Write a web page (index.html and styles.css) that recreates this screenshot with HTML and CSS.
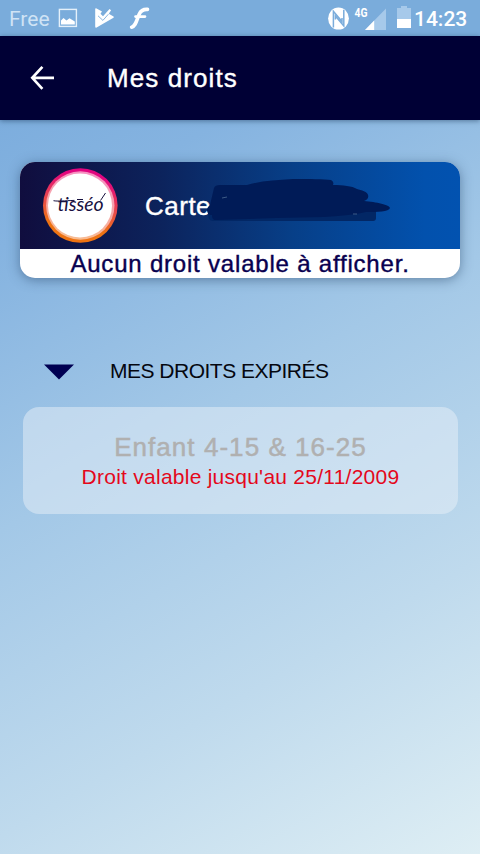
FILE: index.html
```html
<!DOCTYPE html>
<html lang="fr">
<head>
<meta charset="utf-8">
<title>Mes droits</title>
<link rel="stylesheet" href="styles.css">
</head>
<body>
<div class="status">
  <span class="carrier">Free</span>
  <svg class="notif" width="96" height="36" viewBox="56 0 96 36">
    <rect x="59.4" y="9.4" width="17" height="17" fill="none" stroke="#e4f0fa" stroke-width="1.4"/>
    <path d="M61 24.5v-4l2.5-2.6 3 2.6 3-2.2 5.3 3.2v3z" fill="#fff"/>
    <path d="M95.2 9.4q0-1.6 1.4-.9l5.4 3-1.500 2.200 2.500 2.500 6.500-7.200 1.600 1.300-2.300 3.400 4.700 2.800q.8.6 0 1.200L96.600 27.400q-1.400.8-1.400-.8z" fill="#fff"/>
    <path d="M98 15.800l4.900 4.600 5.500-6.200" fill="none" stroke="#7aacdb" stroke-width=".9"/>
    <path d="M131.600 27.200c4.200-1 5-7.200 7.600-13 1.600-3.600 4.200-5.100 8.300-4.800" fill="none" stroke="#fff" stroke-width="3.6" stroke-linecap="round"/>
    <path d="M135.500 16.600h9.500" fill="none" stroke="#fff" stroke-width="2.6" stroke-linecap="round"/>
  </svg>
  <svg class="radio" width="86" height="36" viewBox="326 0 86 36">
    <ellipse cx="338.5" cy="18.6" rx="10.4" ry="11" fill="#fff"/>
    <path d="M333.4 27.5V11.300l8.600 10.200v-3.500M343.800 9.800v16.200l-8.400-10v3.500" fill="none" stroke="#7aacdb" stroke-width="1.5"/>
    <text class="network" x="354.6" y="16.6" textLength="13" lengthAdjust="spacingAndGlyphs">4G</text>
    <path d="M386 8.500V30h-21z" fill="#a6c9ea"/>
    <path d="M374.200 20.500V30H365z" fill="#fff"/>
    <path d="M397 8h4V6h6v2h4v11h-14z" fill="#a6c9ea"/>
    <path d="M397 19h14v9h-14z" fill="#fff"/>
  </svg>
  <span class="clock">14:23</span>
</div>
<header class="appbar">
  <svg width="26" height="26" viewBox="0 0 26 26"><path d="M25 12.800H3.500M13.400 1.800L3.300 12.800l10.100 11" fill="none" stroke="#fff" stroke-width="2.700"/></svg>
  <h1 class="title">Mes droits</h1>
</header>
<main class="content">
  <section class="card">
    <div class="card-head">
      <svg class="logo" width="76" height="76" viewBox="0 0 76 76">
        <defs>
          <linearGradient id="ring" x1=".6" y1="0" x2=".4" y2="1"><stop offset=".1" stop-color="#e2057f"/><stop offset=".5" stop-color="#e94a4b"/><stop offset=".8" stop-color="#ee7312"/></linearGradient>
          <linearGradient id="inner" x1=".6" y1="0" x2=".4" y2="1"><stop offset="0" stop-color="#f590c2"/><stop offset="1" stop-color="#f8bd91"/></linearGradient>
        </defs>
        <circle cx="38.3" cy="37.5" r="37.3" fill="url(#ring)"/>
        <circle cx="38.3" cy="37.5" r="34.2" fill="url(#inner)"/>
        <ellipse cx="38" cy="37.5" rx="32" ry="32" fill="#fff"/>
        <text class="wordmark" x="15.5" y="42.5" textLength="46" lengthAdjust="spacingAndGlyphs">tisséo</text>
        <path d="M11.500 32.700c4 .8 11 0 21-.3M35 31.500h6M58.500 32.500l5-7.500" fill="none" stroke="#17113f" stroke-width="1"/>
      </svg>
      <span class="card-name">Carte</span>
      <svg class="scribble" width="190" height="48" viewBox="204 177 190 48">
        <path d="M208 213c20-2 38-6 64-5l102 1q2 0 2 3v6q0 3-3 3H213q-5 0-5-8z" fill="#022765"/>
        <path d="M214 188q1-3 6-3h27c13-4 28-5 46-6 17 0 31 0 38 1 2 1 3 3 2 5 10 0 19 1 24 4 4 1 11 3 11 6 1 3-1 5-4 6 12 1 26 4 26 7-1 4-13 4-24 4-25 6-58 5-90 6l-60 2c-3 0-4-2-4-5-3 0-5-2-5-5 0-2 1-3 3-5z" fill="#001b57"/>
        <path d="M222 198l5-1M353 214h4" stroke="#58779c" stroke-width=".7"/>
      </svg>
    </div>
    <div class="card-foot"><span>Aucun droit valable à afficher.</span></div>
  </section>
  <div class="section-head">
    <svg width="30" height="16" viewBox="0 0 30 16"><path d="M0 .5h30L15 15.500z" fill="#000052"/></svg>
    <h2 class="section-title">MES DROITS EXPIRÉS</h2>
  </div>
  <section class="expired">
    <div class="pass">Enfant 4-15 &amp; 16-25</div>
    <div class="expiry">Droit valable jusqu'au 25/11/2009</div>
  </section>
</main>
</body>
</html>
```
FILE: styles.css
```css
* { box-sizing: border-box; }
body {
  margin: 0;
  width: 480px;
  height: 854px;
  overflow: hidden;
  display: flex;
  flex-direction: column;
  font-family: "Liberation Sans", Arial, sans-serif;
  white-space: nowrap;
  background: linear-gradient(150deg, #75a8db 0%, #85b3e0 22%, #a3c8e7 47%, #bfdaed 74%, #deeef4 100%);
}
h1, h2 { margin: 0; font-weight: 400; }
svg { display: block; flex: none; }
.status {
  height: 36px;
  flex: none;
  display: flex;
  align-items: center;
  background: #7aacdb;
  font-family: Roboto, sans-serif;
}
.carrier {
  width: 56px;
  padding: 2px 0 0 9px;
  font-size: 21px;
  color: #cfe3f5;
}
.radio { margin-left: 174px; }
.network { font: 700 12px Roboto, sans-serif; fill: #fff; }
.clock {
  padding: 2px 0 0 2px;
  font-size: 21px;
  font-weight: 500;
  color: #fff;
}
.appbar {
  height: 84px;
  flex: none;
  display: flex;
  align-items: center;
  gap: 52px;
  padding-left: 29px;
  background: #000035;
  box-shadow: 0 1px 5px rgba(20, 50, 80, .5);
}
.title {
  font-size: 26px;
  letter-spacing: 1.1px;
  color: #fff;
  -webkit-text-stroke: .4px #fff;
}
.content { padding: 42px 20px 0; }
.card {
  height: 116px;
  border-radius: 15px;
  overflow: hidden;
  background: #fff;
  box-shadow: 0 2px 12px rgba(35, 65, 100, .5);
}
.card-head {
  position: relative;
  height: 87px;
  display: flex;
  align-items: center;
  gap: 27px;
  padding-left: 22px;
  background: linear-gradient(90deg, #100d3e 0%, #0c235c 32%, #073f88 62%, #0251ad 92%, #0252b0 100%);
}
.card-name {
  padding-top: 1px;
  font-size: 26px;
  letter-spacing: .5px;
  color: #fff;
  -webkit-text-stroke: .4px #fff;
}
.scribble {
  position: absolute;
  left: 184px;
  top: 15px;
}
.wordmark { font: italic 400 20px Lato, sans-serif; fill: #17113f; }
.card-foot {
  height: 29px;
  display: flex;
  align-items: center;
  justify-content: center;
  padding-top: 1px;
  font-size: 24px;
  letter-spacing: .8px;
  color: #09004f;
  -webkit-text-stroke: .4px #09004f;
}
.section-head {
  height: 129px;
  display: flex;
  align-items: center;
  gap: 36px;
  padding: 58px 0 0 24px;
}
.section-title {
  padding-bottom: 2px;
  font-size: 21px;
  letter-spacing: -.5px;
  color: #05070f;
}
.expired {
  height: 107px;
  margin: 0 2px 0 3px;
  padding-top: 25px;
  border-radius: 16px;
  background: rgba(232, 240, 247, .5);
  text-align: center;
}
.pass {
  font-size: 26px;
  line-height: 30px;
  letter-spacing: 1.05px;
  color: #b0b0b0;
  -webkit-text-stroke: .5px #b0b0b0;
}
.expiry {
  font-size: 21px;
  line-height: 30px;
  letter-spacing: .25px;
  color: #e4081c;
}
```
